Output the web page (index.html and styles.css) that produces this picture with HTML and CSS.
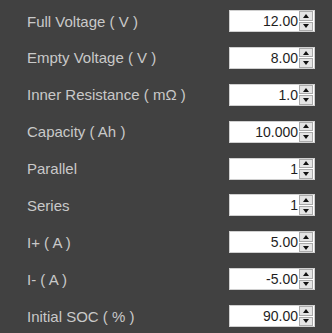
FILE: index.html
```html
<!DOCTYPE html>
<html lang="en">
<head>
    <meta charset="UTF-8">
    <meta name="viewport" content="width=device-width, initial-scale=1.0">
    <title>Battery Settings</title>
    <link rel="stylesheet" href="styles.css">
</head>
<body>

<div class="panel">
    <div class="row">
        <span class="label">Full Voltage ( V )</span>
        <div class="spin"><span class="value">12.00</span><div class="arrows"><span class="up"></span><span class="down"></span></div></div>
    </div>
    <div class="row">
        <span class="label">Empty Voltage ( V )</span>
        <div class="spin"><span class="value">8.00</span><div class="arrows"><span class="up"></span><span class="down"></span></div></div>
    </div>
    <div class="row">
        <span class="label">Inner Resistance ( mΩ )</span>
        <div class="spin"><span class="value">1.0</span><div class="arrows"><span class="up"></span><span class="down"></span></div></div>
    </div>
    <div class="row">
        <span class="label">Capacity ( Ah )</span>
        <div class="spin"><span class="value">10.000</span><div class="arrows"><span class="up"></span><span class="down"></span></div></div>
    </div>
    <div class="row">
        <span class="label">Parallel</span>
        <div class="spin"><span class="value">1</span><div class="arrows"><span class="up"></span><span class="down"></span></div></div>
    </div>
    <div class="row">
        <span class="label">Series</span>
        <div class="spin"><span class="value">1</span><div class="arrows"><span class="up"></span><span class="down"></span></div></div>
    </div>
    <div class="row">
        <span class="label">I+ ( A )</span>
        <div class="spin"><span class="value">5.00</span><div class="arrows"><span class="up"></span><span class="down"></span></div></div>
    </div>
    <div class="row">
        <span class="label">I- ( A )</span>
        <div class="spin"><span class="value">-5.00</span><div class="arrows"><span class="up"></span><span class="down"></span></div></div>
    </div>
    <div class="row">
        <span class="label">Initial SOC ( % )</span>
        <div class="spin"><span class="value">90.00</span><div class="arrows"><span class="up"></span><span class="down"></span></div></div>
    </div>
</div>

</body>
</html>
```

FILE: styles.css
```css
body {
    margin: 0;
    background-color: #414141;
    font-family: "Liberation Sans", Arial, sans-serif;
    font-size: 14px;
    overflow: hidden;
}

.panel {
    padding: 10px 17px 0 27px;
}

.row {
    display: flex;
    justify-content: space-between;
    align-items: center;
    height: 22px;
    margin-bottom: 14.875px;
}

.label {
    color: #c9c9c9;
    font-size: 15px;
}

.spin {
    display: flex;
    align-items: center;
    justify-content: flex-end;
    width: 83px;
    height: 20px;
    background: #fff;
    border: 1px solid #d0d0d0;
    padding-right: 1px;
}

.value {
    color: #1e1e1e;
    padding-right: 1px;
}

.arrows {
    display: flex;
    flex-direction: column;
    gap: 1px;
    width: 14px;
    height: 20px;
}

.up, .down {
    flex: 1;
    position: relative;
    background: #e4e4e4;
    border: 1px solid #aaa;
}

.up::after, .down::after {
    content: "";
    position: absolute;
    left: 50%;
    top: 50%;
    transform: translate(-50%, -50%);
    border-left: 3.5px solid transparent;
    border-right: 3.5px solid transparent;
}

.up::after {
    border-bottom: 4px solid #111;
}

.down::after {
    border-top: 4px solid #111;
}
```
